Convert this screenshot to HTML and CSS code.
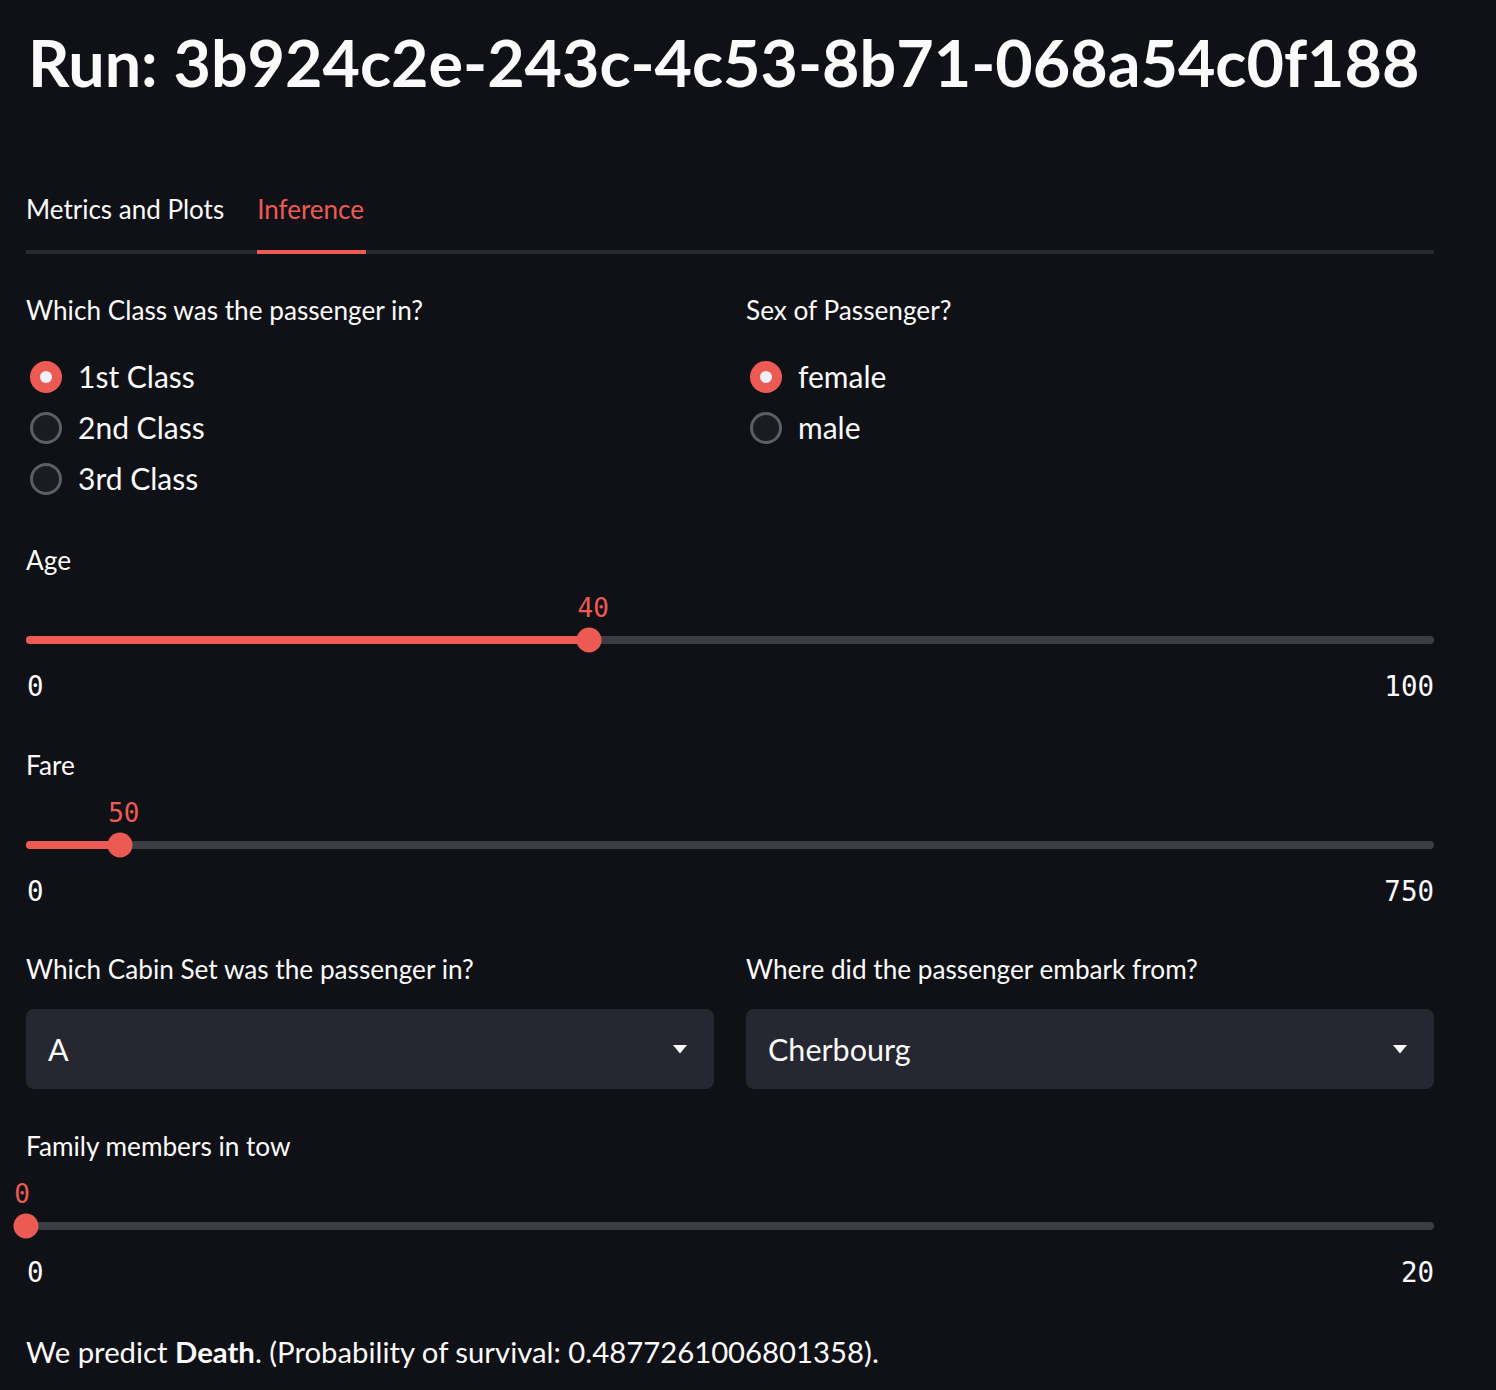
FILE: index.html
```html
<!DOCTYPE html>
<html lang="en">
<head>
<meta charset="utf-8">
<title>Run: 3b924c2e-243c-4c53-8b71-068a54c0f188</title>
<link rel="stylesheet" href="styles.css">
</head>
<body>
<main class="page">
  <h1 class="title">Run: 3b924c2e-243c-4c53-8b71-068a54c0f188</h1>

  <div class="tabs">
    <div class="tab">Metrics and Plots</div>
    <div class="tab tab-active">Inference</div>
  </div>

  <div class="columns">
    <div class="col">
      <div class="label">Which Class was the passenger in?</div>
      <div class="radio-group">
        <div class="radio radio-checked"><span class="dot"></span><span class="radio-text">1st Class</span></div>
        <div class="radio"><span class="dot"></span><span class="radio-text">2nd Class</span></div>
        <div class="radio"><span class="dot"></span><span class="radio-text">3rd Class</span></div>
      </div>
    </div>
    <div class="col">
      <div class="label">Sex of Passenger?</div>
      <div class="radio-group">
        <div class="radio radio-checked"><span class="dot"></span><span class="radio-text">female</span></div>
        <div class="radio"><span class="dot"></span><span class="radio-text">male</span></div>
      </div>
    </div>
  </div>

  <div class="slider slider-age">
    <div class="label">Age</div>
    <div class="slider-body">
      <div class="value-row"><span class="value" style="left: 40%">40</span></div>
      <div class="track-row">
        <div class="track">
          <div class="fill" style="width: 40%"></div>
          <div class="thumb" style="left: 40%"></div>
        </div>
      </div>
      <div class="ticks"><span>0</span><span>100</span></div>
    </div>
  </div>

  <div class="slider slider-fare">
    <div class="label">Fare</div>
    <div class="slider-body">
      <div class="value-row"><span class="value" style="left: 6.6667%">50</span></div>
      <div class="track-row">
        <div class="track">
          <div class="fill" style="width: 6.6667%"></div>
          <div class="thumb" style="left: 6.6667%"></div>
        </div>
      </div>
      <div class="ticks"><span>0</span><span>750</span></div>
    </div>
  </div>

  <div class="columns columns-select">
    <div class="col">
      <div class="label">Which Cabin Set was the passenger in?</div>
      <div class="select">
        <span class="select-text">A</span>
        <svg class="caret" width="14" height="9" viewBox="0 0 14 9"><path d="M0 0 H14 L7 8.5 Z" fill="#fafafa"/></svg>
      </div>
    </div>
    <div class="col">
      <div class="label">Where did the passenger embark from?</div>
      <div class="select">
        <span class="select-text">Cherbourg</span>
        <svg class="caret" width="14" height="9" viewBox="0 0 14 9"><path d="M0 0 H14 L7 8.5 Z" fill="#fafafa"/></svg>
      </div>
    </div>
  </div>

  <div class="slider slider-family">
    <div class="label">Family members in tow</div>
    <div class="slider-body">
      <div class="value-row"><span class="value value-min" style="left: 0%">0</span></div>
      <div class="track-row">
        <div class="track">
          <div class="fill" style="width: 0%"></div>
          <div class="thumb" style="left: 0%"></div>
        </div>
      </div>
      <div class="ticks"><span>0</span><span>20</span></div>
    </div>
  </div>

  <p class="result">We predict <strong>Death</strong>. (Probability of survival: 0.4877261006801358).</p>
</main>
</body>
</html>
```

FILE: styles.css
```css
html, body {
  margin: 0;
  padding: 0;
  background: #101117;
}

body {
  color: #fafafa;
  font-family: Lato, "Noto Sans", "Liberation Sans", sans-serif;
}

.page {
  width: 1408px;
  padding: 0 62px 0 26px;
  display: flex;
  flex-direction: column;
}

.title {
  margin: 0;
  height: 126px;
  line-height: 124px;
  font-size: 64.6px;
  font-weight: 700;
  padding-left: 2px;
  white-space: nowrap;
}

.tabs {
  margin-top: 40px;
  display: flex;
  gap: 33px;
  box-shadow: inset 0 -4px 0 #28292f;
}

.tab {
  height: 84px;
  line-height: 86px;
  font-size: 26px;
  border-bottom: 4px solid transparent;
  white-space: nowrap;
}

.tab-active {
  color: #ec5b53;
  border-bottom-color: #ec5b53;
  padding-right: 2px;
}

.columns {
  display: flex;
  gap: 32px;
}

.col {
  flex: 1 1 0;
  display: flex;
  flex-direction: column;
}

.label {
  height: 40px;
  line-height: 40px;
  font-size: 26.2px;
  white-space: nowrap;
}

.columns .label {
  margin-top: 36px;
}

.radio-group {
  margin-top: 21px;
  display: flex;
  flex-direction: column;
}

.radio {
  height: 51px;
  display: flex;
  align-items: center;
  padding-left: 4px;
}

.dot {
  box-sizing: border-box;
  width: 32px;
  height: 32px;
  border-radius: 50%;
  border: 3px solid #5c5e65;
  background: #1a1c24;
  display: flex;
  align-items: center;
  justify-content: center;
  flex: none;
}

.radio-checked .dot {
  border: none;
  background: #ec5b53;
}

.radio-checked .dot::after {
  content: "";
  width: 12px;
  height: 12px;
  border-radius: 50%;
  background: #f0f2f6;
}

.radio-text {
  margin-left: 16px;
  font-size: 30px;
  line-height: 51px;
  white-space: nowrap;
}

.slider {
  display: flex;
  flex-direction: column;
}

.slider-age {
  margin-top: 36px;
}

.slider-fare {
  margin-top: 39px;
}

.slider-family {
  margin-top: 37px;
}

.slider-body {
  margin-top: 8px;
  display: flex;
  flex-direction: column;
}

.value-row {
  position: relative;
  height: 40px;
}

.value {
  position: absolute;
  top: 0;
  line-height: 40px;
  font-family: "DejaVu Sans Mono", "Liberation Mono", monospace;
  font-size: 26px;
  color: #ec5b53;
  transform: translateX(calc(-50% + 4px));
  white-space: nowrap;
}

.value-min {
  transform: translateX(calc(-50% - 4px));
}

.track-row {
  height: 24px;
  display: flex;
  align-items: center;
}

.track {
  position: relative;
  width: 100%;
  height: 8px;
  border-radius: 4px;
  background: #3b3d45;
}

.fill {
  height: 100%;
  border-radius: 4px 0 0 4px;
  background: #ec5b53;
}

.thumb {
  position: absolute;
  top: 50%;
  width: 25px;
  height: 25px;
  border-radius: 50%;
  background: #ec5b53;
  transform: translate(-50%, -50%);
}

.ticks {
  margin-top: 14px;
  height: 40px;
  display: flex;
  justify-content: space-between;
  align-items: center;
  font-family: "DejaVu Sans Mono", "Liberation Mono", monospace;
  font-size: 27.5px;
  padding-left: 1px;
}

.columns-select .label {
  margin-top: 38px;
}

.select {
  margin-top: 20px;
  height: 80px;
  box-sizing: border-box;
  background: #262730;
  border-radius: 8px;
  display: flex;
  align-items: center;
  justify-content: space-between;
  padding: 0 27px 0 22px;
}

.select-text {
  font-size: 30.5px;
  white-space: nowrap;
}

.caret {
  display: block;
}

.result {
  margin: 40px 0 0;
  height: 40px;
  line-height: 40px;
  font-size: 29.3px;
  white-space: nowrap;
}

.result strong {
  font-weight: 700;
}
```
